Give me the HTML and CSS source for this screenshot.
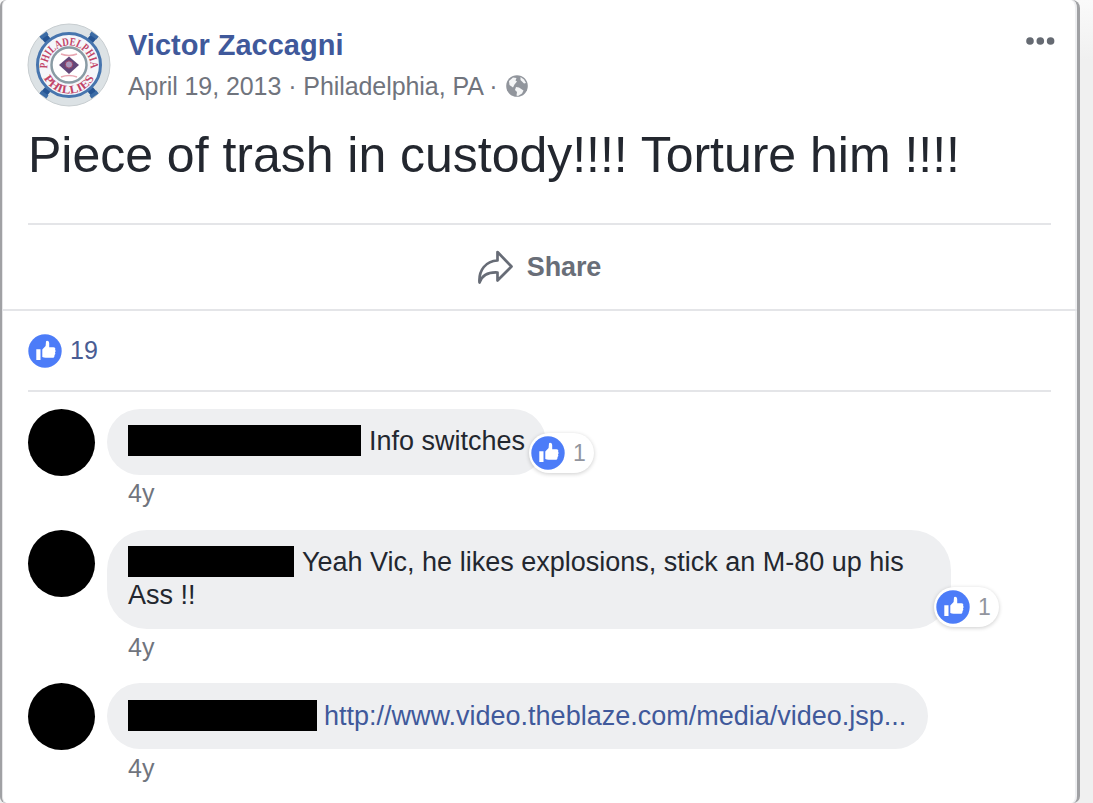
FILE: index.html
```html
<!DOCTYPE html>
<html lang="en">
<head>
<meta charset="utf-8">
<title>Post</title>
<link rel="stylesheet" href="styles.css">
</head>
<body>
<svg class="defs" aria-hidden="true">
  <symbol id="like" viewBox="0 0 34 34">
    <circle cx="17" cy="17" r="16.7" fill="#4c7cf8"/>
    <path fill="#fff" d="M8.300 15.300h4.200v10.800H8.300zM14.300 15.600l3.300-3.600.4-4.400c.2-1.400 3.200-1.200 3.200 1.700v3.900h4.200c1.700 0 2.300 1.400 1.700 2.600.8.800.6 2-.1 2.600.6.900.3 2-.5 2.500.3 1.500-.5 2.900-2 2.900h-7c-1.300 0-2.100-.3-3.200-.8z"/>
  </symbol>
</svg>
<main class="post">
  <header class="head">
    <svg class="logo" viewBox="0 0 84 84">
      <defs>
        <path id="arc-top" d="M20.500 44A21.500 21.500 0 1 1 63.500 44"/>
        <path id="arc-bottom" d="M13.500 42A28.500 28.500 0 0 0 70.500 42"/>
      </defs>
      <circle cx="42" cy="42" r="41" fill="#dce2e5" stroke="#c7cdd0"/>
      <path d="M16 12l11 13M68 12L57 25M16 72l11-13M68 72L57 59" stroke="#265594" stroke-width="7"/>
      <path d="M13.500 15l7-5M70.500 15l-7-5M13.500 69l7 5M70.500 69l-7 5" stroke="#3c6ca6" stroke-width="3.500"/>
      <circle cx="42" cy="42" r="31.500" fill="#f5f6fa" stroke="#4775ae" stroke-width="3"/>
      <circle cx="42" cy="42" r="17.500" fill="#fff" stroke="#899ba4" stroke-width="2.500"/>
      <text class="logo-text"><textPath href="#arc-top" startOffset="50%" textLength="70" lengthAdjust="spacingAndGlyphs">PHILADELPHIA</textPath></text>
      <text class="logo-text"><textPath href="#arc-bottom" startOffset="50%" textLength="62" lengthAdjust="spacingAndGlyphs">PHILLIES</textPath></text>
      <path d="M34 31q8 3 16 0M34 54q8-3 16 0" fill="none" stroke="#e8a7b2" stroke-width="1.500"/>
      <path d="M42 33.500l10 8.500-10 9-10-9z" fill="#624779"/>
      <circle cx="42" cy="41.500" r="3.700" fill="#a998bb" stroke="#993d61"/>
    </svg>
    <div class="who">
      <div class="name">Victor Zaccagni</div>
      <div class="meta"><span class="date">April 19, 2013 · Philadelphia, PA ·</span>
        <svg class="globe" viewBox="0 0 22 22"><circle cx="11" cy="11" r="10.800" fill="#91959c"/><path fill="#f4f5f6" d="M3 6l4-3.500 3.500.5-1 2.500 1.500 1-2.500 3L7 12.500 3.500 10zM14.500 2l3.500 2.500 2 3.500-2 .5-2-2-1.500-1.500zM10 12l3 .5 4.500 3-1.500 3-4 2.500-1.500-.5.5-3.500-2-2z"/></svg>
      </div>
    </div>
    <svg class="more" viewBox="0 0 30 10"><g fill="#656a72"><circle cx="5" cy="5" r="3.800"/><circle cx="15.300" cy="5" r="3.800"/><circle cx="25.600" cy="5" r="3.800"/></g></svg>
  </header>
  <h1 class="message">Piece of trash in custody!!!! Torture him !!!!</h1>
  <div class="actions">
    <svg class="share-icon" viewBox="0 0 38 36"><path d="M21.500 3L35.500 17.500 21.500 31.500v-8C12 23 6 26.500 3.500 33.500 2.500 21 10 12 21.500 11.500z" fill="none" stroke="#676c76" stroke-width="2.700" stroke-linejoin="round"/></svg>
    <span class="share">Share</span>
  </div>
  <div class="likes"><svg class="thumb"><use href="#like"/></svg><span>19</span></div>
  <section class="comments">
    <article class="comment">
      <div class="avatar"></div>
      <div class="body">
        <div class="bubble first"><span class="redacted r1"></span>Info switches
          <div class="badge"><svg class="thumb"><use href="#like"/></svg><span>1</span></div>
        </div>
        <div class="time">4y</div>
      </div>
    </article>
    <article class="comment">
      <div class="avatar"></div>
      <div class="body">
        <div class="bubble second"><span class="redacted r2"></span>Yeah Vic, he likes explosions, stick an M-80 up his<br>Ass !!
          <div class="badge"><svg class="thumb"><use href="#like"/></svg><span>1</span></div>
        </div>
        <div class="time">4y</div>
      </div>
    </article>
    <article class="comment">
      <div class="avatar"></div>
      <div class="body">
        <div class="bubble third"><span class="redacted r3"></span><span class="link">http://www.video.theblaze.com/media/video.jsp...</span></div>
        <div class="time">4y</div>
      </div>
    </article>
  </section>
</main>
</body>
</html>
```
FILE: styles.css
```css
* { box-sizing: border-box; }
body {
  margin: 0;
  height: 803px;
  overflow: hidden;
  background: linear-gradient(#fafafa, #f0f0f0 60px);
  font-family: "Liberation Sans", Arial, sans-serif;
  color: #23272f;
}
.defs { position: absolute; width: 0; height: 0; }
.post {
  width: 1080px;
  height: 803px;
  padding-top: 1px;
  background: #fff;
  border: solid #a0a1a4;
  border-width: 0 3px 0 2px;
  border-radius: 6px 8px 7px 6px;
  box-shadow: inset -2px 0 #eeeff1, inset 1px 0 #e6e6e8;
}
.head { display: flex; height: 120px; padding: 22px 22px 0 25px; }
.logo { width: 84px; height: 84px; flex: none; }
.logo-text {
  font: bold 11.500px "Liberation Serif", serif;
  fill: #c24568;
  text-anchor: middle;
}
.who { margin-left: 17px; flex: 1; }
.name {
  margin-top: 5px;
  line-height: 34px;
  font-size: 29px;
  font-weight: bold;
  color: #40599b;
  white-space: nowrap;
}
.meta {
  display: flex;
  align-items: center;
  margin-top: 6px;
  line-height: 36px;
  font-size: 25px;
  letter-spacing: -.07px;
  color: #70747d;
  white-space: nowrap;
}
.globe { width: 22px; height: 22px; margin-left: 8px; }
.more { width: 30px; height: 10px; margin-top: 13px; }
.message {
  margin: 0 26px 0 26px;
  height: 104px;
  padding-top: 4px;
  line-height: 60px;
  font-size: 50px;
  letter-spacing: -.02px;
  font-weight: normal;
  white-space: nowrap;
  border-bottom: 2px solid #e4e5e8;
}
.actions {
  display: flex;
  justify-content: center;
  align-items: center;
  gap: 13px;
  height: 86px;
  padding-right: 2px;
  border-bottom: 2px solid #e4e5e8;
}
.share-icon { width: 38px; height: 36px; }
.share { font-size: 27px; font-weight: bold; letter-spacing: -.1px; color: #696e78; }
.likes {
  display: flex;
  align-items: center;
  gap: 8px;
  height: 81px;
  margin: 0 26px 0 26px;
  border-bottom: 2px solid #e4e5e8;
  font-size: 25px;
  color: #495c93;
}
.thumb { width: 34px; height: 34px; flex: none; }
.comments { padding: 17px 0 0 26px; }
.comment { display: flex; gap: 12px; }
.avatar { width: 67px; height: 67px; border-radius: 50%; background: #000; flex: none; }
.bubble {
  position: relative;
  height: 66px;
  padding: 16px 0 0 21px;
  border-radius: 33px;
  background: #eeeff1;
  line-height: 33px;
  font-size: 27px;
  white-space: nowrap;
}
.first { width: 439px; }
.second { width: 844px; height: 99px; border-radius: 40px; }
.third { width: 821px; padding-top: 17px; }
.redacted {
  display: inline-block;
  height: 31px;
  margin-right: 8px;
  vertical-align: -6px;
  background: #000;
}
.r1 { width: 233px; }
.r2 { width: 166px; }
.r3 { width: 189px; margin-right: 7px; }
.link { color: #40599b; }
.badge {
  position: absolute;
  right: -48px;
  bottom: 2px;
  display: flex;
  align-items: center;
  gap: 8px;
  width: 65px;
  height: 40px;
  padding-left: 2px;
  border-radius: 20px;
  background: #fff;
  box-shadow: 0 1px 4px rgba(0, 0, 0, .2);
  font-size: 23px;
  color: #92959e;
}
.time {
  height: 55px;
  padding-left: 21px;
  line-height: 37px;
  font-size: 25px;
  color: #70747d;
}
.comment:nth-child(2) .time { height: 54px; }
.comment:nth-child(3) .time { line-height: 39px; }
```
